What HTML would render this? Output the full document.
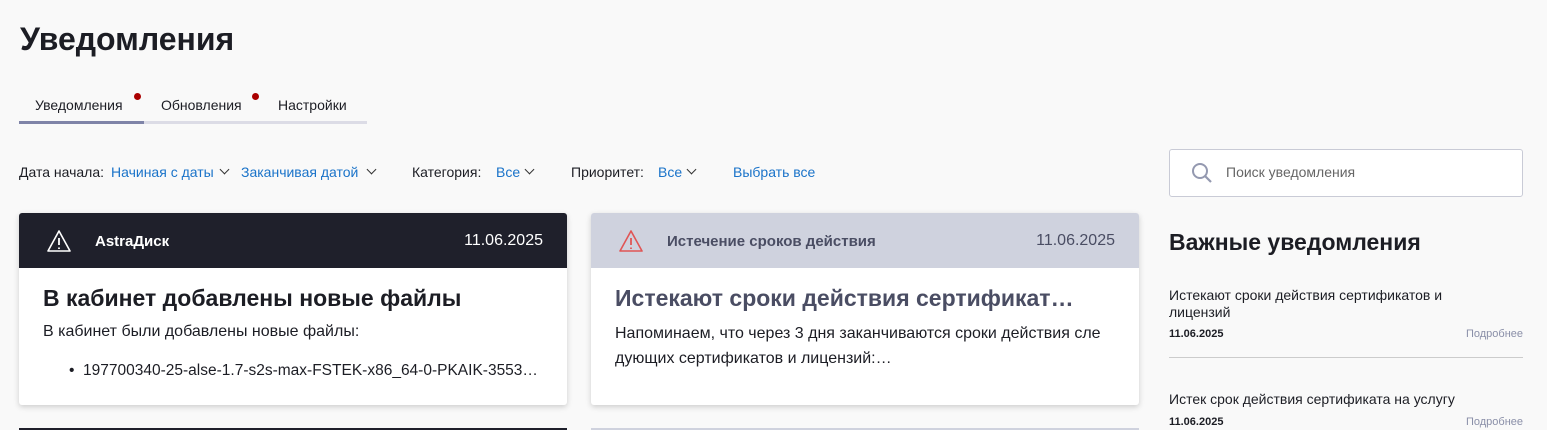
<!DOCTYPE html><html><head><meta charset="utf-8"><style>
body{margin:0;width:1547px;height:430px;overflow:hidden;background:#f9f9f9;font-family:"Liberation Sans",sans-serif;color:#1c1d24;position:relative}
.a{position:absolute;white-space:nowrap}
.blue{color:#1a73c9}
.card{position:absolute;top:213px;width:548px;height:192px;background:#fff;border-radius:3px;box-shadow:0 2px 6px rgba(0,0,0,.18);overflow:hidden}
.hd{height:55px;position:relative}
.chev{position:absolute;width:6px;height:6px;border-right:1.4px solid #333;border-bottom:1.4px solid #333;transform:rotate(45deg);top:166px}
.f{top:164px;font-size:14px}
</style></head><body>
<div class="a" style="left:20px;top:21px;font-size:32px;font-weight:bold">Уведомления</div>
<div class="a" style="left:35px;top:97px;font-size:14px">Уведомления</div>
<div class="a" style="left:134px;top:93px;width:7px;height:7px;border-radius:50%;background:#a00"></div>
<div class="a" style="left:161px;top:97px;font-size:14px">Обновления</div>
<div class="a" style="left:252px;top:93px;width:7px;height:7px;border-radius:50%;background:#a00"></div>
<div class="a" style="left:278px;top:97px;font-size:14px">Настройки</div>
<div class="a" style="left:19px;top:121px;width:348px;height:3px;background:#dcdce6"></div>
<div class="a" style="left:19px;top:121px;width:125px;height:3px;background:#7f84a8"></div>
<div class="a f" style="left:19px">Дата начала:</div>
<div class="a f blue" style="left:111px">Начиная с даты</div><span class="chev" style="left:221px"></span>
<div class="a f blue" style="left:241px">Заканчивая датой</div><span class="chev" style="left:368px"></span>
<div class="a f" style="left:412px">Категория:</div>
<div class="a f blue" style="left:496px">Все</div><span class="chev" style="left:526px"></span>
<div class="a f" style="left:571px">Приоритет:</div>
<div class="a f blue" style="left:658px">Все</div><span class="chev" style="left:688px"></span>
<div class="a f blue" style="left:733px">Выбрать все</div>

<div class="card" style="left:19px"><div class="hd" style="background:#1f202b;color:#fff">
<svg class="a" style="left:27px;top:16px" width="26" height="24" viewBox="0 0 26 24"><path d="M13 2L24 22H2Z" fill="none" stroke="#fff" stroke-width="1.6" stroke-linejoin="round"/><path d="M13 9v7M13 18.5v1.5" stroke="#fff" stroke-width="1.8"/></svg>
<div class="a" style="left:76px;top:20px;font-size:15px;font-weight:bold">AstraДиск</div>
<div class="a" style="right:24px;top:19px;font-size:16px">11.06.2025</div></div>
<div class="a" style="left:24px;top:72px;font-size:23px;font-weight:bold">В кабинет добавлены новые файлы</div>
<div class="a" style="left:24px;top:110px;font-size:16px">В кабинет были добавлены новые файлы:</div>
<div class="a" style="left:50px;top:149px;font-size:15.5px">• &nbsp;197700340-25-alse-1.7-s2s-max-FSTEK-x86_64-0-PKAIK-3553…</div>
</div>
<div class="card" style="left:591px"><div class="hd" style="background:#cfd2de;color:#4a4d63">
<svg class="a" style="left:27px;top:16px" width="26" height="24" viewBox="0 0 26 24"><path d="M13 2L24 22H2Z" fill="none" stroke="#e05555" stroke-width="1.6" stroke-linejoin="round"/><path d="M13 9v7M13 18.5v1.5" stroke="#e05555" stroke-width="1.8"/></svg>
<div class="a" style="left:76px;top:20px;font-size:15px;font-weight:bold">Истечение сроков действия</div>
<div class="a" style="right:24px;top:19px;font-size:16px">11.06.2025</div></div>
<div class="a" style="left:24px;top:72px;font-size:23px;font-weight:bold;color:#4a4d63">Истекают сроки действия сертификат…</div>
<div class="a" style="left:24px;top:108px;font-size:16px;line-height:25px">Напоминаем, что через 3 дня заканчиваются сроки действия сле<br>дующих сертификатов и лицензий:…</div>
</div>
<div class="a" style="left:19px;top:428px;width:548px;height:2px;background:#1f202b"></div>
<div class="a" style="left:591px;top:428px;width:548px;height:2px;background:#cfd2de"></div>

<div class="a" style="left:1169px;top:149px;width:352px;height:46px;border:1px solid #c9cbd6;border-radius:3px;background:#fff"></div>
<svg class="a" style="left:1190px;top:161px" width="24" height="24" viewBox="0 0 24 24"><circle cx="10" cy="10" r="7" fill="none" stroke="#9499b0" stroke-width="2"/><path d="M15 15l6 6" stroke="#9499b0" stroke-width="2.2"/></svg>
<div class="a" style="left:1226px;top:164px;font-size:14px;color:#666">Поиск уведомления</div>
<div class="a" style="left:1169px;top:229px;font-size:23px;font-weight:bold">Важные уведомления</div>
<div class="a" style="left:1169px;top:287px;font-size:14px;line-height:17px">Истекают сроки действия сертификатов и<br>лицензий</div>
<div class="a" style="left:1169px;top:328px;font-size:11px;font-weight:bold">11.06.2025</div>
<div class="a" style="right:24px;top:328px;font-size:11px;color:#8a8fa8">Подробнее</div>
<div class="a" style="left:1169px;top:357px;width:354px;height:1px;background:#ccc"></div>
<div class="a" style="left:1169px;top:391px;font-size:14px">Истек срок действия сертификата на услугу</div>
<div class="a" style="left:1169px;top:416px;font-size:11px;font-weight:bold">11.06.2025</div>
<div class="a" style="right:24px;top:416px;font-size:11px;color:#8a8fa8">Подробнее</div>
</body></html>
